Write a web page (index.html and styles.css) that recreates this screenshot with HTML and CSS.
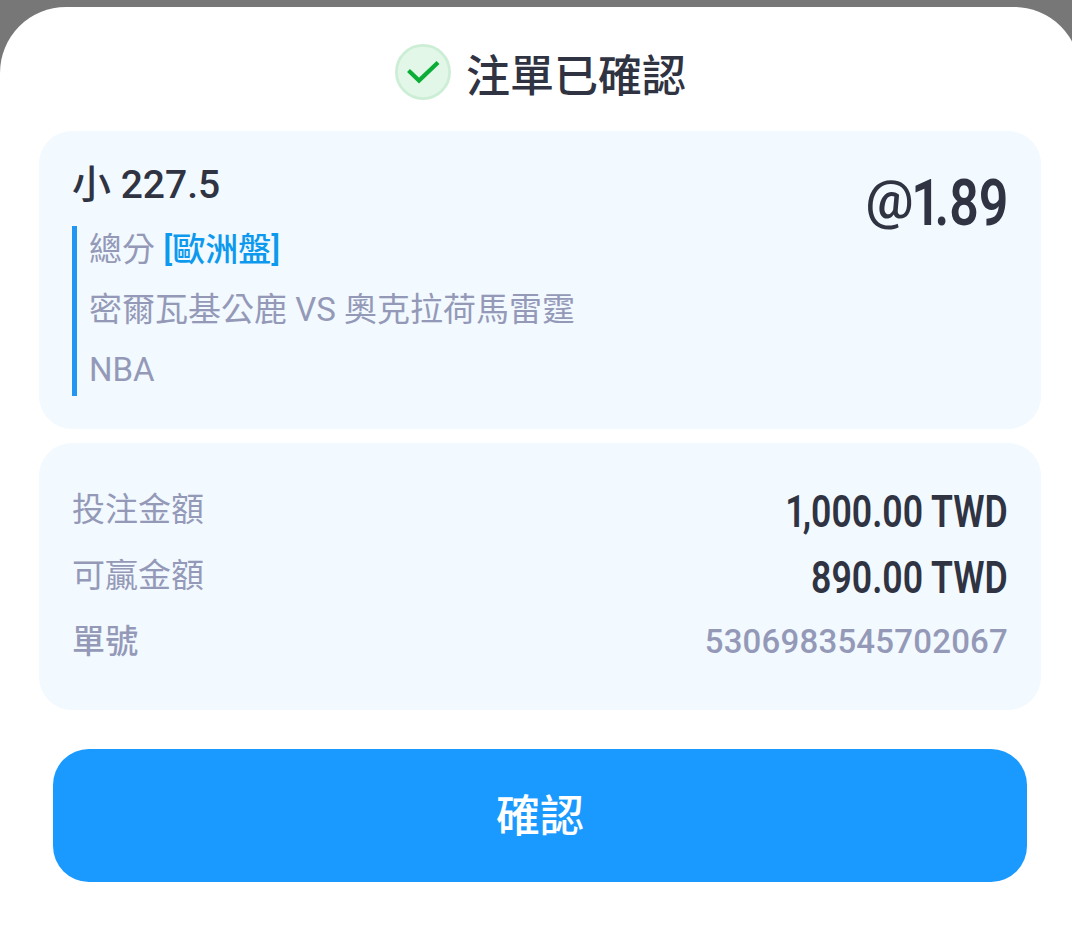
FILE: index.html
```html
<!DOCTYPE html>
<html lang="zh-Hant">
<head>
  <meta charset="UTF-8" />
  <meta name="viewport" content="width=device-width, initial-scale=1" />
  <title>注單已確認</title>
  <link rel="stylesheet" href="styles.css">
</head>
<body>
  <div class="sheet">
    <div class="header">
      <svg class="check" viewBox="0 0 56 56">
        <circle cx="28" cy="28" r="26.6" fill="#e2f7e7" stroke="#cdeed6" stroke-width="2.8"/>
        <path d="M13.5 26.5 L24 36.5 L43 18.5" fill="none" stroke="#0aad35" stroke-width="4.2"/>
      </svg>
      <h1>注單已確認</h1>
    </div>

    <div class="card bet">
      <div>
        <h2>小 227.5</h2>
        <div class="detail">
          <p>總分 <span class="market">[歐洲盤]</span></p>
          <p>密爾瓦基公鹿 VS 奧克拉荷馬雷霆</p>
          <p>NBA</p>
        </div>
      </div>
      <div class="odds"><span class="at">@</span><span class="one">1</span>.89</div>
    </div>

    <div class="card summary">
      <div class="row">
        <span>投注金額</span>
        <span class="amount"><span class="one">1</span>,000.00 TWD</span>
      </div>
      <div class="row">
        <span>可贏金額</span>
        <span class="amount">890.00 TWD</span>
      </div>
      <div class="row number">
        <span>單號</span>
        <span>5306983545702067</span>
      </div>
    </div>

    <button class="confirm">確認</button>
  </div>
</body>
</html>
```
FILE: styles.css
```css
* {
  box-sizing: border-box;
}
body {
  margin: 0;
  padding-top: 7px;
  height: 934px;
  overflow: hidden;
  background: #777;
  color: #2f3342;
  font-family: Roboto, "Noto Sans CJK TC", sans-serif;
}
h1, h2, p {
  margin: 0;
  font-weight: 500;
}
.sheet {
  width: 1080px;
  height: 927px;
  padding: 37px 39px 0;
  background: #fff;
  border-radius: 66px 66px 0 0;
}
.header {
  display: flex;
  justify-content: center;
  gap: 15px;
  height: 87px;
  padding-left: 1px;
}
.check {
  width: 56px;
  height: 56px;
}
h1 {
  font-size: 44px;
  line-height: 66px;
}
.card {
  width: 1002px;
  padding: 33px;
  border-radius: 33px;
  background: #f2f9ff;
}
.bet {
  display: flex;
  justify-content: space-between;
  height: 298px;
  margin-bottom: 14px;
}
h2 {
  font-size: 39px;
  line-height: 42px;
  margin-bottom: 20px;
}
.detail {
  height: 170px;
  padding-left: 12px;
  border-left: 5px solid #2196f3;
  color: #9599b8;
  font-size: 33px;
}
.detail p {
  height: 60px;
  line-height: 48px;
  font-weight: 400;
}
.market {
  color: #0d99ee;
  font-weight: 500;
}
/* narrow figures, squeezed towards the right edge */
.odds, .amount {
  font-weight: 600;
  transform: scaleX(0.81);
  transform-origin: right center;
}
.odds {
  font-size: 64px;
  line-height: 80px;
}
.at {
  display: inline-block;
  margin-right: -3px;
  font-size: 53px;
  font-weight: 500;
  line-height: 1;
  vertical-align: 7px;
  transform: scaleX(1.25);
  transform-origin: right center;
}
.one {
  letter-spacing: -0.08em;
}
.odds .one {
  letter-spacing: -8px;
}
.summary {
  height: 267px;
}
.row {
  display: flex;
  justify-content: space-between;
  height: 66px;
  line-height: 68px;
  color: #9599b8;
  font-size: 33px;
}
.amount {
  color: #2f3342;
  font-size: 44px;
  line-height: 72px;
}
.number {
  font-weight: 500;
  letter-spacing: 0.2px;
}
.confirm {
  display: block;
  width: 974px;
  height: 133px;
  margin: 39px 14px 0;
  padding: 0 0 6px;
  border: none;
  border-radius: 36px;
  background: #1a9aff;
  color: #fff;
  font: 500 44px Roboto, "Noto Sans CJK TC", sans-serif;
}
```
